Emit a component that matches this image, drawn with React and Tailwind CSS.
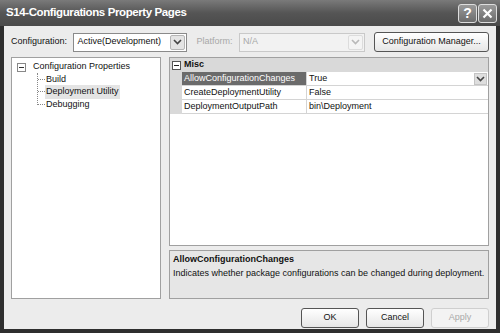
import React from 'react';

function Chevron({ disabled }) {
  return (
    <svg width="9" height="6" viewBox="0 0 9 6">
      <path d="M1 1 L4.5 4.5 L8 1" fill="none" stroke={disabled ? '#b8b8b8' : '#444'} strokeWidth="1.6" />
    </svg>
  );
}

function Select({ value, width, disabled }) {
  return (
    <div className={`flex items-center h-[19px] border ${disabled ? 'border-[#c9c9c9] bg-[#f2f2f2] text-[#a8a8a8]' : 'border-[#8a8a8a] bg-white text-[#111]'}`} style={{ width }}>
      <span className="flex-1 pl-[3px] truncate">{value}</span>
      <div className={`w-[15px] h-[15px] mr-[1px] flex items-center justify-center rounded-[2px] border ${disabled ? 'border-[#dcdcdc] bg-[#f4f4f4]' : 'border-[#b5b5b5] bg-[#e4e4e4]'}`}>
        <Chevron disabled={disabled} />
      </div>
    </div>
  );
}

function Button({ children, disabled, className = '' }) {
  return (
    <div className={`h-[20px] flex items-center justify-center rounded-[3px] border ${disabled ? 'border-[#cfcfcf] text-[#a9a9a9] bg-[#f3f3f3]' : 'border-[#555] text-[#111] bg-gradient-to-b from-white to-[#e6e6e6]'} ${className}`}>
      {children}
    </div>
  );
}

export default function App() {
  const rows = [
    ['AllowConfigurationChanges', 'True', true],
    ['CreateDeploymentUtility', 'False', false],
    ['DeploymentOutputPath', 'bin\\Deployment', false],
  ];
  return (
    <div className="w-[500px] h-[333px] bg-[#2e2e2e] flex flex-col text-[9px] overflow-hidden" style={{ fontFamily: '"Liberation Sans", Arial, sans-serif' }}>
      {/* title bar */}
      <div className="h-[26px] flex items-center justify-between pl-[6px] pr-[3px] bg-gradient-to-b from-[#7a7a7a] via-[#555] to-[#4a4a4a]">
        <span className="text-white font-bold text-[11.5px] tracking-[-0.4px]">S14-Configurations Property Pages</span>
        <div className="flex gap-[1px]">
          <div className="w-[19px] h-[19px] rounded-[3px] border border-[#ddd] bg-gradient-to-b from-[#9a9a9a] to-[#6c6c6c] flex items-center justify-center text-white font-bold text-[14px]">?</div>
          <div className="w-[19px] h-[19px] rounded-[3px] border border-[#ddd] bg-gradient-to-b from-[#9a9a9a] to-[#6c6c6c] flex items-center justify-center">
            <svg width="11" height="11" viewBox="0 0 11 11"><path d="M1.5 1.5 L9.5 9.5 M9.5 1.5 L1.5 9.5" stroke="white" strokeWidth="2.2" /></svg>
          </div>
        </div>
      </div>
      {/* body */}
      <div className="flex-1 mx-[4px] mb-[4px] bg-[#ececec] flex flex-col px-[7px] pt-[6px]">
        <div className="flex items-center h-[20px]">
          <span className="w-[63px] text-[#111]">Configuration:</span>
          <Select value="Active(Development)" width="115px" />
          <span className="ml-[9px] w-[43px] text-[#a8a8a8]">Platform:</span>
          <Select value="N/A" width="127px" disabled />
          <Button className="ml-[9px] w-[116px]">Configuration Manager...</Button>
        </div>
        <div className="flex mt-[5px] gap-[8px] h-[242px]">
          {/* tree */}
          <div className="w-[150px] bg-white border border-[#a0a0a0] pt-[3px] pl-[5px] text-[#111]">
            <div className="flex items-center h-[12px]">
              <div className="w-[9px] h-[9px] border border-[#888] flex items-center justify-center mr-[7px]">
                <div className="w-[5px] h-[1px] bg-[#333]" />
              </div>
              <span>Configuration Properties</span>
            </div>
            <div className="ml-[20px] border-l border-dotted border-[#888] h-[32px] flex flex-col">
              {['Build', 'Deployment Utility', 'Debugging'].map((t, i) => (
                <div key={t} className="flex items-center h-[12.5px]">
                  <div className="w-[7px] border-t border-dotted border-[#888]" />
                  <span className={`px-[1px] ${i === 1 ? 'bg-[#e4e4e4]' : ''}`}>{t}</span>
                </div>
              ))}
            </div>
          </div>
          {/* right */}
          <div className="flex-1 flex flex-col gap-[4px]">
            <div className="h-[189px] bg-white border border-[#a0a0a0] flex flex-col">
              <div className="flex items-stretch h-[14px] bg-[#d9d9d9]">
                <div className="w-[12px] flex items-center justify-center">
                  <div className="w-[9px] h-[9px] border border-[#555] bg-white flex items-center justify-center">
                    <div className="w-[5px] h-[1px] bg-[#222]" />
                  </div>
                </div>
                <span className="pl-[2px] font-bold text-[#111] flex items-center">Misc</span>
              </div>
              {rows.map(([k, v, sel]) => (
                <div key={k} className="flex h-[14px]">
                  <div className="w-[12px] bg-[#d9d9d9]" />
                  <div className={`w-[125px] pl-[2px] flex items-center border-b border-r border-[#d4d4d4] ${sel ? 'bg-[#6b6b6b] text-white' : 'text-[#111]'}`}>{k}</div>
                  <div className="flex-1 pl-[2px] flex items-center border-b border-[#d4d4d4] text-[#111] justify-between">
                    <span>{v}</span>
                    {sel && (
                      <div className="w-[13px] h-[12px] mr-[1px] bg-[#dedede] border border-[#c4c4c4] flex items-center justify-center">
                        <Chevron />
                      </div>
                    )}
                  </div>
                </div>
              ))}
            </div>
            <div className="flex-1 bg-[#e6e6e6] border border-[#a0a0a0] px-[3px] pt-[2px] text-[#111]">
              <div className="font-bold">AllowConfigurationChanges</div>
              <div>Indicates whether package configurations can be changed during deployment.</div>
            </div>
          </div>
        </div>
        <div className="flex justify-end gap-[7px] mt-[9px]">
          <Button className="w-[58px]">OK</Button>
          <Button className="w-[58px]">Cancel</Button>
          <Button className="w-[58px]" disabled>Apply</Button>
        </div>
      </div>
    </div>
  );
}
